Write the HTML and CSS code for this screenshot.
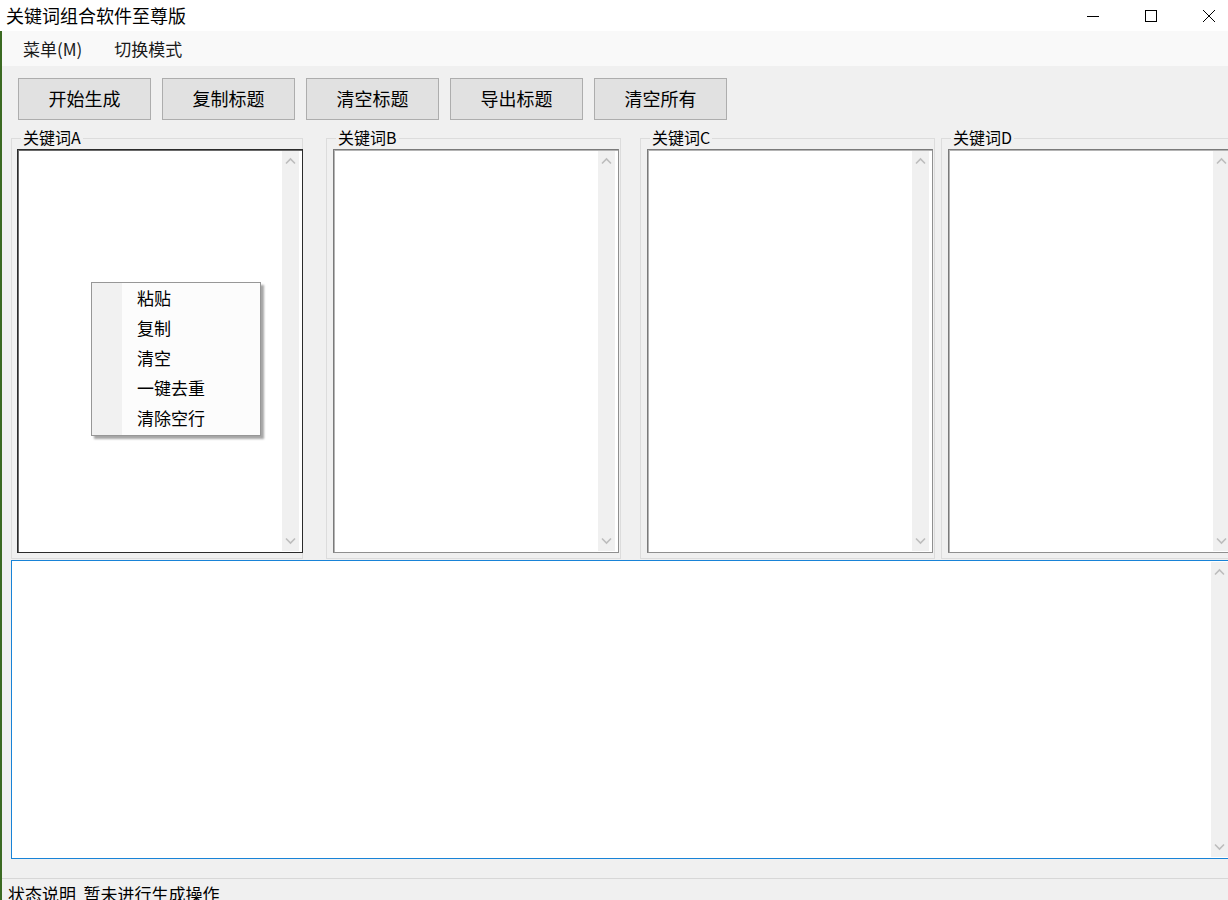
FILE: index.html
```html
<!DOCTYPE html>
<html lang="zh-CN">
<head>
<meta charset="utf-8">
<title>关键词组合软件至尊版</title>
<link rel="stylesheet" href="styles.css">
</head>
<body>
<div class="app">
  <div class="titlebar">
    <span class="title">关键词组合软件至尊版</span>
    <div class="controls">
      <span class="ctl"><svg width="14" height="14" viewBox="0 0 14 14"><line x1="1" y1="7.5" x2="13" y2="7.5" stroke="#000" stroke-width="1"/></svg></span>
      <span class="ctl"><svg width="14" height="14" viewBox="0 0 14 14"><rect x="1.5" y="1.5" width="11" height="11" fill="none" stroke="#000" stroke-width="1"/></svg></span>
      <span class="ctl"><svg width="14" height="14" viewBox="0 0 14 14"><path d="M1 1 L13 13 M13 1 L1 13" stroke="#000" stroke-width="1"/></svg></span>
    </div>
  </div>
  <div class="main">
    <div class="menubar">
      <span class="menu-item">菜单(M)</span>
      <span class="menu-item">切换模式</span>
    </div>
    <div class="toolbar">
      <button class="btn">开始生成</button>
      <button class="btn">复制标题</button>
      <button class="btn">清空标题</button>
      <button class="btn">导出标题</button>
      <button class="btn">清空所有</button>
    </div>
    <div class="groups">
      <div class="group group-a">
        <div class="legend">关键词A</div>
        <div class="textbox textbox-focus">
          <div class="tb-text"></div>
          <div class="vscroll">
            <svg class="arrow" width="17" height="21" viewBox="0 0 17 21"><polyline points="4,12.5 8.5,8 13,12.5" fill="none" stroke="#bdbdbd" stroke-width="1.6"/></svg>
            <svg class="arrow" width="17" height="21" viewBox="0 0 17 21"><polyline points="4,8.5 8.5,13 13,8.5" fill="none" stroke="#bdbdbd" stroke-width="1.6"/></svg>
          </div>
        </div>
      </div>
      <div class="group group-b">
        <div class="legend">关键词B</div>
        <div class="textbox">
          <div class="tb-text"></div>
          <div class="vscroll">
            <svg class="arrow" width="17" height="21" viewBox="0 0 17 21"><polyline points="4,12.5 8.5,8 13,12.5" fill="none" stroke="#bdbdbd" stroke-width="1.6"/></svg>
            <svg class="arrow" width="17" height="21" viewBox="0 0 17 21"><polyline points="4,8.5 8.5,13 13,8.5" fill="none" stroke="#bdbdbd" stroke-width="1.6"/></svg>
          </div>
        </div>
      </div>
      <div class="group group-c">
        <div class="legend">关键词C</div>
        <div class="textbox">
          <div class="tb-text"></div>
          <div class="vscroll">
            <svg class="arrow" width="17" height="21" viewBox="0 0 17 21"><polyline points="4,12.5 8.5,8 13,12.5" fill="none" stroke="#bdbdbd" stroke-width="1.6"/></svg>
            <svg class="arrow" width="17" height="21" viewBox="0 0 17 21"><polyline points="4,8.5 8.5,13 13,8.5" fill="none" stroke="#bdbdbd" stroke-width="1.6"/></svg>
          </div>
        </div>
      </div>
      <div class="group group-d">
        <div class="legend">关键词D</div>
        <div class="textbox">
          <div class="tb-text"></div>
          <div class="vscroll">
            <svg class="arrow" width="17" height="21" viewBox="0 0 17 21"><polyline points="4,12.5 8.5,8 13,12.5" fill="none" stroke="#bdbdbd" stroke-width="1.6"/></svg>
            <svg class="arrow" width="17" height="21" viewBox="0 0 17 21"><polyline points="4,8.5 8.5,13 13,8.5" fill="none" stroke="#bdbdbd" stroke-width="1.6"/></svg>
          </div>
        </div>
      </div>
    </div>
    <div class="output">
      <div class="tb-text"></div>
      <div class="vscroll">
        <svg class="arrow" width="17" height="21" viewBox="0 0 17 21"><polyline points="4,12.5 8.5,8 13,12.5" fill="none" stroke="#bdbdbd" stroke-width="1.6"/></svg>
        <svg class="arrow" width="17" height="21" viewBox="0 0 17 21"><polyline points="4,8.5 8.5,13 13,8.5" fill="none" stroke="#bdbdbd" stroke-width="1.6"/></svg>
      </div>
    </div>
    <div class="status">状态说明&nbsp;&nbsp;暂未进行生成操作</div>
  </div>
  <div class="context-menu">
    <div class="cm-item">粘贴</div>
    <div class="cm-item">复制</div>
    <div class="cm-item">清空</div>
    <div class="cm-item">一键去重</div>
    <div class="cm-item">清除空行</div>
  </div>
</div>
</body>
</html>
```

FILE: styles.css
```css
* {
  box-sizing: border-box;
}

html, body {
  margin: 0;
  padding: 0;
  width: 1228px;
  height: 900px;
  overflow: hidden;
  background: #f0f0f0;
  font-family: "Noto Sans CJK SC", "Noto Sans", sans-serif;
  color: #000;
}

.app {
  position: relative;
  width: 1238px;
  height: 900px;
  background: #f0f0f0;
}

.titlebar {
  display: flex;
  align-items: center;
  height: 31px;
  background: #ffffff;
}

.title {
  padding-left: 6px;
  font-size: 18px;
  line-height: 31px;
}

.controls {
  margin-left: auto;
  display: flex;
  height: 31px;
}

.ctl {
  width: 58px;
  height: 31px;
  display: flex;
  align-items: center;
  justify-content: center;
}

.main {
  border-left: 2px solid #3b6a22;
  height: 869px;
}

.menubar {
  display: flex;
  align-items: center;
  height: 35px;
  padding-left: 21px;
  gap: 32px;
  background: #f9f9f9;
}

.menu-item {
  font-size: 17px;
  color: #1a1a1a;
  line-height: 24px;
}

.toolbar {
  display: flex;
  gap: 11px;
  padding: 12px 0 0 16px;
}

.btn {
  width: 133px;
  height: 42px;
  border: 1px solid #adadad;
  background: #e1e1e1;
  font-family: "Noto Sans CJK SC", "Noto Sans", sans-serif;
  font-size: 18px;
  color: #000;
  padding: 0 0 2px 0;
  margin: 0;
}

.groups {
  display: flex;
  margin-top: 18px;
}

.group {
  border: 1px solid #dcdcdc;
  padding: 0 0 5px 6px;
  flex: none;
}

.group-a {
  width: 292px;
  margin-left: 9px;
  padding-left: 5px;
}

.group-b {
  width: 295px;
  margin-left: 23px;
}

.group-c {
  width: 295px;
  margin-left: 19px;
}

.group-d {
  width: 297px;
  margin-left: 6px;
}

.legend {
  width: fit-content;
  margin: -11px 0 0 3px;
  padding: 0 2px;
  height: 19px;
  line-height: 18px;
  font-size: 16px;
  background: #f0f0f0;
  color: #000;
}

.group-a .legend {
  margin-left: 4px;
}

.textbox {
  margin-top: 2px;
  width: 286px;
  height: 404px;
  background: #fff;
  border: 1px solid #8f8f8f;
  border-top-color: #7a7a7a;
  border-left-color: #7a7a7a;
  box-shadow: inset 1px 1px 0 #b4b4b4;
  display: flex;
}

.textbox-focus {
  border-color: #2b2b2b;
  box-shadow: inset 1px 1px 0 #6a6a6a;
}

.tb-text {
  flex: 1;
}

.vscroll {
  width: 17px;
  margin: 1px 3px 1px 0;
  background: #f0f0f0;
  display: flex;
  flex-direction: column;
  justify-content: space-between;
}

.arrow {
  display: block;
}

.output {
  margin: 1px 0 0 9px;
  width: 1221px;
  height: 299px;
  border: 1px solid #1883d7;
  background: #fff;
  display: flex;
}

.status {
  margin-top: 19px;
  border-top: 1px solid #d7d7d7;
  padding: 3px 0 0 6px;
  font-size: 17px;
  line-height: 24px;
  white-space: nowrap;
}

.context-menu {
  position: absolute;
  left: 91px;
  top: 282px;
  width: 170px;
  height: 154px;
  border: 1px solid #979797;
  background: linear-gradient(to right, #f1f1f1 0, #f1f1f1 30px, #fcfcfc 30px);
  box-shadow: 3px 3px 2px rgba(0, 0, 0, 0.35);
  padding-top: 0;
}

.cm-item {
  height: 30px;
  line-height: 30px;
  padding-left: 45px;
  font-size: 17px;
  color: #000;
}
```
